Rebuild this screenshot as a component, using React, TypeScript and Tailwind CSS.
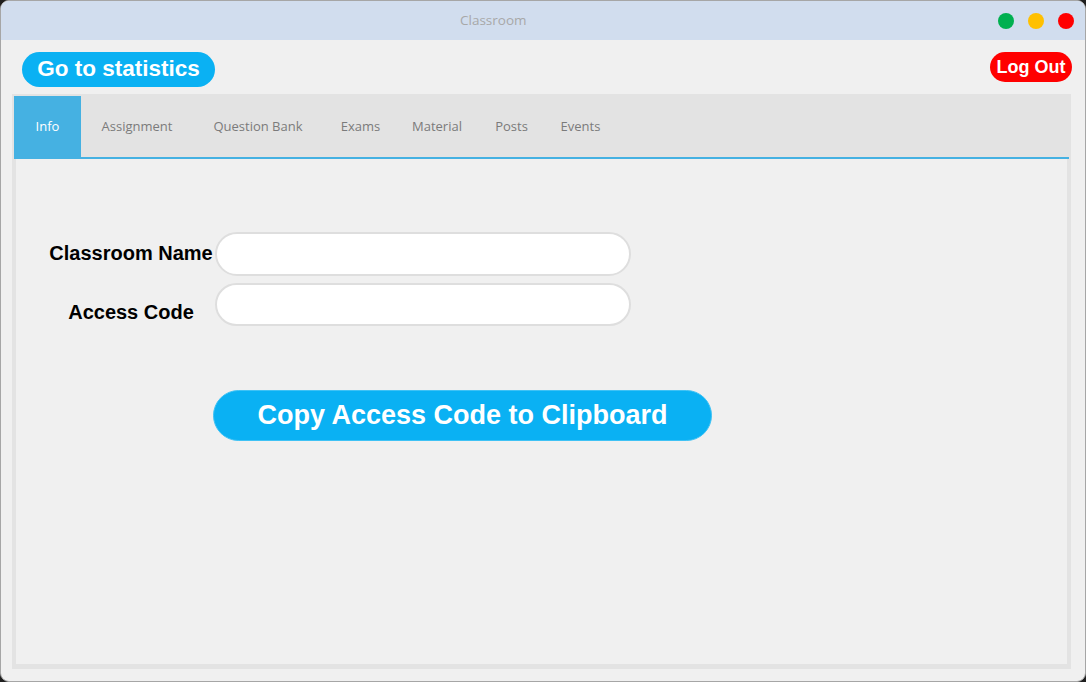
import React from "react";

const tabs = [
  { label: "Info", w: "w-[67px]" },
  { label: "Assignment", w: "w-[112px]" },
  { label: "Question Bank", w: "w-[130px]" },
  { label: "Exams", w: "w-[75px]" },
  { label: "Material", w: "w-[78px]" },
  { label: "Posts", w: "w-[71px]" },
  { label: "Events", w: "w-[67px]" },
];

const arial = { fontFamily: '"Liberation Sans", Arial, sans-serif' };

export default function App() {
  return (
    <div className="w-[1086px] h-[682px] bg-[#1f1f1f]">
      <div className="h-full rounded-[9px] border border-[#a6a6a6] bg-[#f0f0f0] overflow-hidden flex flex-col">
        {/* Title bar */}
        <div className="h-[39px] shrink-0 bg-[#d1ddee] flex items-center">
          <span className="pl-[459px] text-[13.5px] text-[#a8a8a8] font-['Open_Sans',sans-serif]">
            Classroom
          </span>
          <div className="ml-auto mr-[11px] flex items-center gap-[14px]">
            <span className="size-[16px] rounded-full bg-[#00b050]" />
            <span className="size-[16px] rounded-full bg-[#ffc000]" />
            <span className="size-[16px] rounded-full bg-[#ff0000]" />
          </div>
        </div>

        {/* Top actions */}
        <div className="flex items-start justify-between pl-[21px] pr-[13px] pt-[12px]">
          <button
            style={arial}
            className="h-[35px] w-[193px] rounded-full bg-[#0ab1f3] text-white font-bold text-[22.5px] leading-none"
          >
            Go to statistics
          </button>
          <button
            style={arial}
            className="h-[30px] w-[82px] rounded-full bg-[#ff0000] text-white font-bold text-[18px] leading-none"
          >
            Log Out
          </button>
        </div>

        {/* Tab panel */}
        <div className="flex-1 flex flex-col ml-[11px] mr-[14px] mt-[7px] mb-[12px]">
          <div className="bg-[#e3e3e3] pt-[2px] px-[2px] flex flex-col">
            <div className="flex h-[61px]">
              {tabs.map((t, i) => (
                <div
                  key={t.label}
                  className={`${t.w} flex items-center justify-center text-[13px] font-['Open_Sans',sans-serif] ${
                    i === 0 ? "bg-[#45b1e2] text-white" : "text-[#7b7b7b]"
                  }`}
                >
                  {t.label}
                </div>
              ))}
            </div>
            <div className="h-[2px] bg-[#45b1e2]" />
          </div>

          <div className="flex-1 border-x-[4px] border-b-[5px] border-[#e3e3e3] bg-[#f0f0f0]">
            <div className="pt-[73px] pl-[31px]">
              <div className="flex items-center">
                <label
                  style={arial}
                  className="w-[168px] text-center font-bold text-[20px] text-black pb-[3px]"
                >
                  Classroom Name
                </label>
                <input className="w-[416px] h-[44px] rounded-full bg-white border-2 border-[#dedede] outline-none" />
              </div>
              <div className="flex items-center mt-[5px]">
                <label
                  style={arial}
                  className="w-[168px] text-center font-bold text-[20px] text-black pt-[16px]"
                >
                  Access Code
                </label>
                <input className="w-[416px] h-[43px] rounded-full bg-white border-2 border-[#dedede] outline-none" />
              </div>
              <button
                style={arial}
                className="mt-[63px] ml-[166px] h-[51px] w-[499px] rounded-full bg-[#0ab1f3] border border-[#3fc2f5] text-white font-bold text-[27px] leading-none"
              >
                Copy Access Code to Clipboard
              </button>
            </div>
          </div>
        </div>
      </div>
    </div>
  );
}
